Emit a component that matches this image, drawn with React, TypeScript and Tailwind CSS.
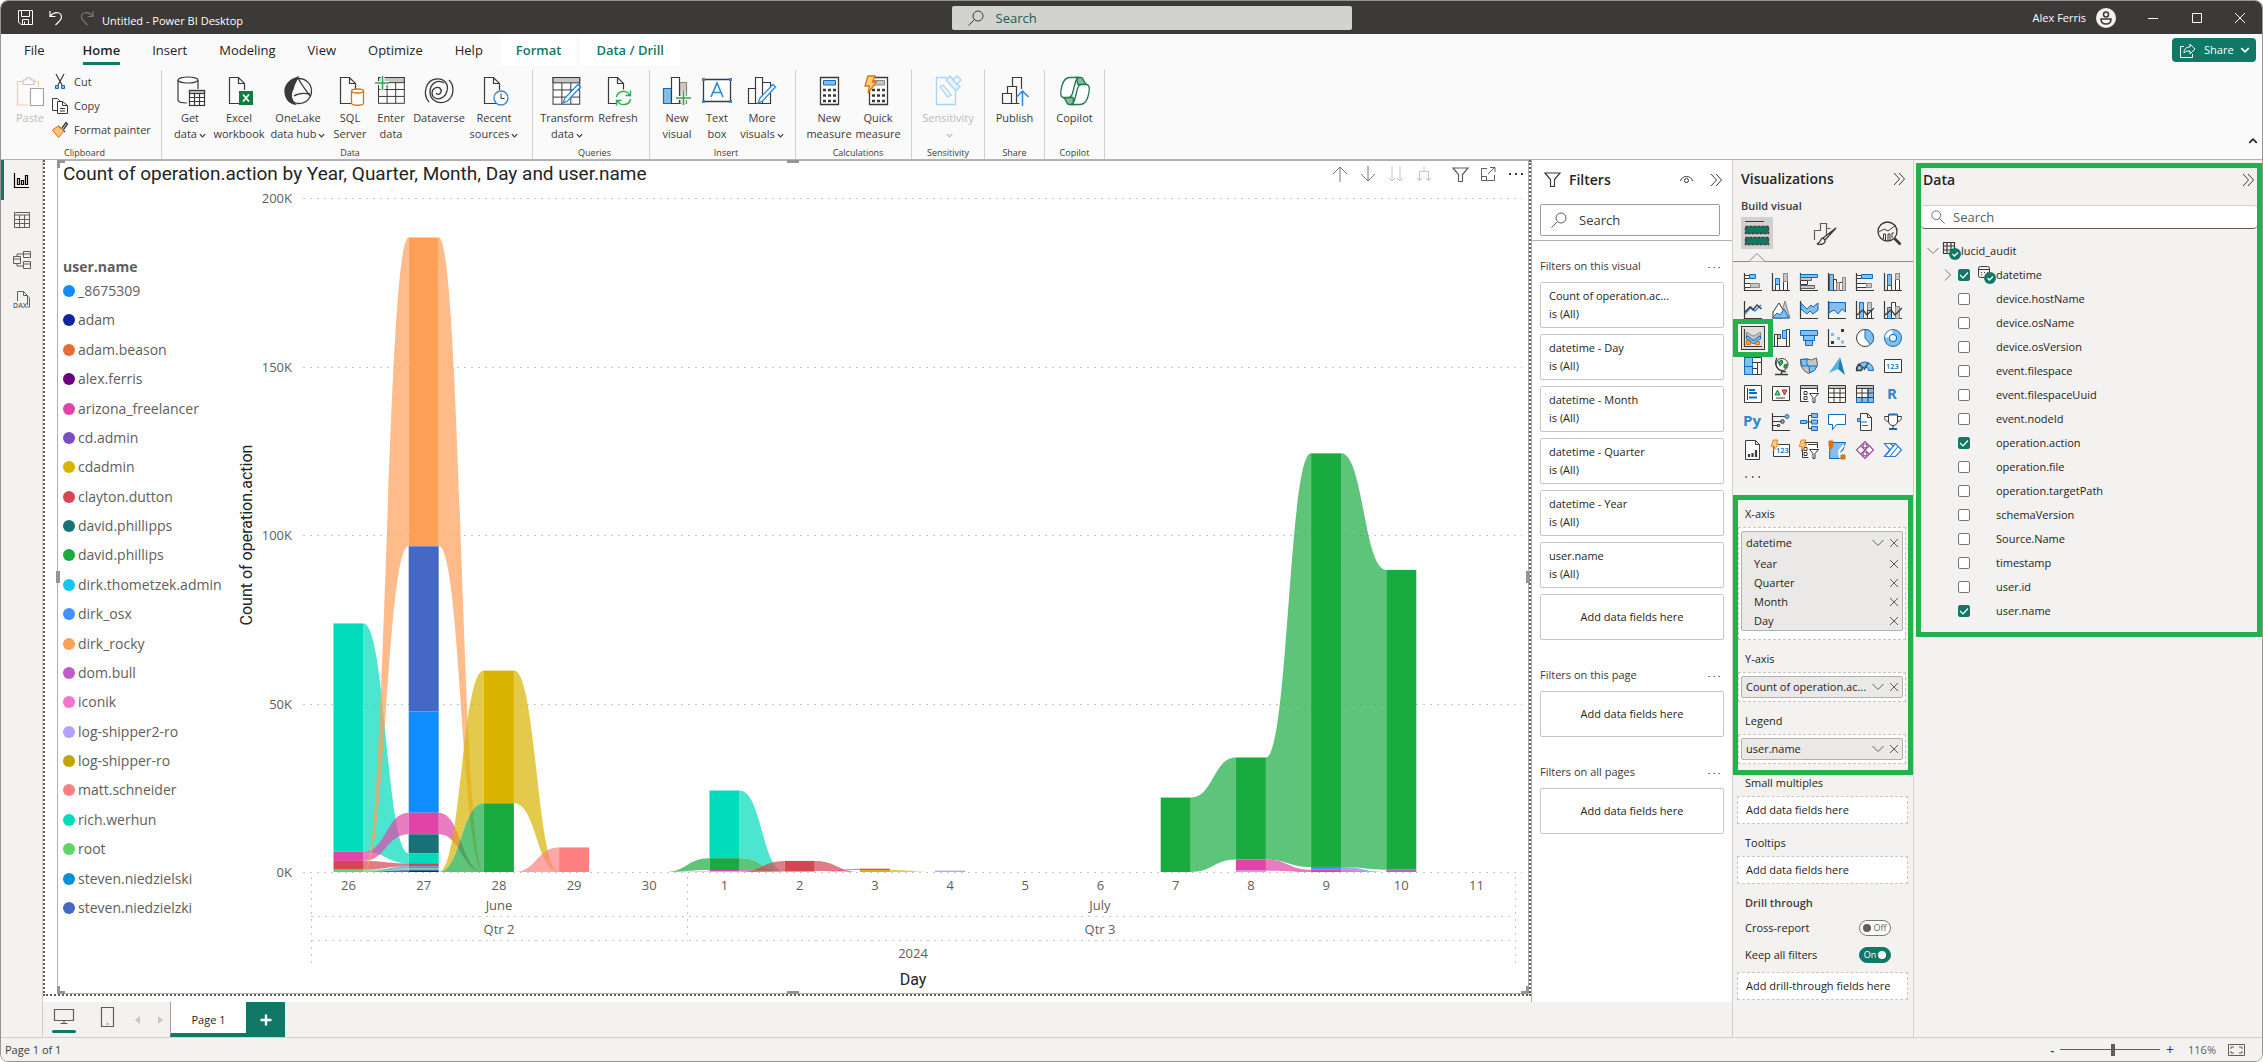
import { ReactNode } from "react";

const INK = "#3b3a39";
const BLUE = "#0f6cbd";
const SKY = "#83beec";
const SILVER = "#c8c6c4";
const GREEN = "#117865";
const ORANGE = "#d9730d";

/* ---------- chart data ---------- */

const users: Record<string, string> = {
  _8675309: "#118dff",
  adam: "#12239e",
  "adam.beason": "#e66c37",
  "alex.ferris": "#6b007b",
  arizona_freelancer: "#e044a7",
  "cd.admin": "#744ec2",
  cdadmin: "#d9b300",
  "clayton.dutton": "#d64550",
  "david.phillipps": "#197278",
  "david.phillips": "#1aab40",
  "dirk.thometzek.admin": "#15c6f4",
  dirk_osx: "#4092ff",
  dirk_rocky: "#ffa058",
  "dom.bull": "#be5dc9",
  iconik: "#f472d0",
  "log-shipper2-ro": "#b5a1ff",
  "log-shipper-ro": "#c4a200",
  "matt.schneider": "#ff8080",
  "rich.werhun": "#00dbbc",
  root: "#5bd667",
  "steven.niedzielski": "#0091d5",
  "steven.niedzielzki": "#4668c5",
};

type Slice = [user: string, thousands: number];

// Slices run from the top of the stack down. A zero keeps the ribbon
// to or from the neighbouring day alive.
const days: { label: string; slices: Slice[] }[] = [
  {
    label: "26",
    slices: [
      ["rich.werhun", 67.8],
      ["arizona_freelancer", 2.7],
      ["clayton.dutton", 2.6],
      ["root", 0.7],
      ["dirk_rocky", 0],
      ["dirk_osx", 0],
      ["adam", 0],
    ],
  },
  {
    label: "27",
    slices: [
      ["dirk_rocky", 91.7],
      ["steven.niedzielzki", 49],
      ["_8675309", 30.1],
      ["arizona_freelancer", 6.4],
      ["david.phillipps", 5.6],
      ["rich.werhun", 3],
      ["clayton.dutton", 0.9],
      ["dirk_osx", 0.6],
      ["root", 0.6],
      ["adam", 0.5],
      ["cdadmin", 0],
      ["david.phillips", 0],
    ],
  },
  {
    label: "28",
    slices: [
      ["cdadmin", 39.4],
      ["david.phillips", 20.4],
      ["dirk_rocky", 0],
      ["arizona_freelancer", 0],
      ["matt.schneider", 0],
    ],
  },
  { label: "29", slices: [["matt.schneider", 7.3], ["cdadmin", 0]] },
  { label: "30", slices: [["david.phillips", 0], ["log-shipper2-ro", 0]] },
  {
    label: "1",
    slices: [
      ["rich.werhun", 20.1],
      ["david.phillips", 3.5],
      ["arizona_freelancer", 0.4],
      ["log-shipper2-ro", 0.2],
      ["clayton.dutton", 0],
    ],
  },
  {
    label: "2",
    slices: [
      ["clayton.dutton", 3],
      ["log-shipper2-ro", 0.3],
      ["rich.werhun", 0],
      ["david.phillips", 0],
      ["arizona_freelancer", 0],
    ],
  },
  { label: "3", slices: [["arizona_freelancer", 0.4], ["cdadmin", 0.6], ["clayton.dutton", 0]] },
  { label: "4", slices: [["log-shipper2-ro", 0.4], ["cdadmin", 0]] },
  { label: "5", slices: [] },
  { label: "6", slices: [] },
  { label: "7", slices: [["david.phillips", 22.1]] },
  {
    label: "8",
    slices: [["david.phillips", 30.3], ["arizona_freelancer", 3.3], ["log-shipper2-ro", 0.4]],
  },
  {
    label: "9",
    slices: [["david.phillips", 122.8], ["dirk_osx", 0.8], ["arizona_freelancer", 0.7]],
  },
  {
    label: "10",
    slices: [["david.phillips", 89], ["dom.bull", 0.7], ["dirk_osx", 0], ["arizona_freelancer", 0]],
  },
  { label: "11", slices: [] },
];

const BASE = 685;
const PX_PER_K = 3.368;
const FIRST = 113.5;
const STEP = 75.2;
const HALF = 15;

const stacks = days.map(({ slices }) => {
  let left = slices.reduce((sum, [, v]) => sum + v, 0);
  return slices.map(([user, v]) => {
    const top = BASE - left * PX_PER_K;
    left -= v;
    return { user, top, bottom: BASE - Math.max(left, 0) * PX_PER_K };
  });
});

function RibbonChart() {
  const ribbons: ReactNode[] = [];
  stacks.forEach((stack, i) => {
    stack.forEach((a) => {
      const b = (stacks[i + 1] ?? []).find((s) => s.user === a.user);
      if (!b) return;
      const x0 = FIRST + i * STEP + HALF;
      const x1 = x0 + STEP - HALF * 2;
      const mid = (x0 + x1) / 2;
      ribbons.push(
        <path
          key={`${i}-${a.user}`}
          d={`M${x0} ${a.top}C${mid} ${a.top} ${mid} ${b.top} ${x1} ${b.top}V${b.bottom}C${mid} ${b.bottom} ${mid} ${a.bottom} ${x0} ${a.bottom}Z`}
          fill={users[a.user]}
          fillOpacity={0.7}
        />
      );
    });
  });

  return (
    <svg viewBox="0 0 1293 804" className="w-full" role="img" aria-label="Ribbon chart">
      <g stroke="#c8c6c4" strokeDasharray="2 5">
        {[0, 50, 100, 150, 200].map((k) => (
          <path key={k} d={`M68 ${Math.round(BASE - k * PX_PER_K) + 0.5}H1287`} />
        ))}
        <path d="M76.5 690V780M452.5 690V754M1280.5 690V780M76 729.5H1280M76 753.5H1280" />
      </g>
      {ribbons}
      {stacks.map((stack, i) =>
        stack
          .filter((s) => s.bottom > s.top)
          .map((s) => (
            <rect
              key={`${i}-${s.user}`}
              x={FIRST + i * STEP - HALF}
              y={s.top}
              width={HALF * 2}
              height={s.bottom - s.top}
              fill={users[s.user]}
            />
          ))
      )}
      <g fill="#605e5c" fontSize="13">
        {[0, 50, 100, 150, 200].map((k) => (
          <text key={k} x="57" y={BASE - k * PX_PER_K + 5} textAnchor="end">
            {k}K
          </text>
        ))}
        <g textAnchor="middle">
          {days.map((d, i) => (
            <text key={d.label} x={FIRST + i * STEP} y="703">
              {d.label}
            </text>
          ))}
          <text x="264" y="723">June</text>
          <text x="865" y="723">July</text>
          <text x="264" y="747">Qtr 2</text>
          <text x="865" y="747">Qtr 3</text>
          <text x="678" y="771">2024</text>
        </g>
      </g>
      <g className="font-['Roboto',sans-serif]" fill="#252423" fontSize="16" textAnchor="middle">
        <text x="678" y="798">Day</text>
        <text transform="translate(17 348) rotate(-90)">Count of operation.action</text>
      </g>
    </svg>
  );
}

/* ---------- icons ---------- */

function Icon({
  size,
  box,
  color = INK,
  children,
}: {
  size: string;
  box: string;
  color?: string;
  children: ReactNode;
}) {
  return (
    <svg viewBox={box} className={`${size} shrink-0 overflow-visible`} fill="none" stroke={color} aria-hidden="true">
      {children}
    </svg>
  );
}

function Chevron({ className = "size-2" }: { className?: string }) {
  return (
    <svg viewBox="0 0 8 8" className={`${className} inline-block shrink-0`} fill="none" stroke="currentColor" aria-hidden="true">
      <path d="M1 2.5l3 3 3-3" strokeWidth="1.4" />
    </svg>
  );
}

function Search({ className = "size-4" }: { className?: string }) {
  return (
    <svg viewBox="0 0 16 16" className={`${className} shrink-0`} fill="none" stroke="currentColor" aria-hidden="true">
      <circle cx="10" cy="6" r="5" />
      <path d="M6.5 9.5L.5 15.5" />
    </svg>
  );
}

function DoubleChevron() {
  return (
    <button aria-label="Collapse pane">
      <Icon size="size-3" box="0 0 12 12">
        <path d="M1 0l5.500 6L1 12M6 0l5.500 6L6 12" />
      </Icon>
    </button>
  );
}

function Cross() {
  return (
    <button aria-label="Remove field">
      <Icon size="size-2" box="0 0 8 8" color="#605e5c">
        <path d="M0 0l8 8M8 0L0 8" />
      </Icon>
    </button>
  );
}

function Funnel({ size, color = INK }: { size: string; color?: string }) {
  return (
    <Icon size={size} box="0 0 17 17" color={color}>
      <path d="M1 2h15L10.500 8.500V15.500H6.500V8.500Z" strokeWidth="1.2" />
    </Icon>
  );
}

const page = <path d="M18.500 27.500H5.500V1.500H14.500L20.500 7.500V14M14.500 1.500V7.500H20.500" strokeWidth="1.2" />;

function Grid({ x, y, s }: { x: number; y: number; s: number }) {
  return (
    <g>
      <rect x={x} y={y} width={s * 3} height={s * 3} fill="#fff" />
      <rect x={x} y={y} width={s * 3} height={s * 0.6} fill={SILVER} />
      <path d={`M${x} ${y + s * 1.4}h${s * 3}M${x} ${y + s * 2.2}h${s * 3}M${x + s} ${y + s * 0.6}v${s * 2.4}M${x + s * 2} ${y + s * 0.6}v${s * 2.4}`} />
    </g>
  );
}

function Pencil() {
  return <path d="M13 22L26 8.500l2.500 2.500L15.500 25l-4.500 2z" fill="#fff" stroke="#2b88d8" strokeWidth="1.3" />;
}

function Bolt() {
  return <path d="M5 0h7l-2.500 6h4L5 17l1.500-7H2z" fill="#fccf7e" stroke={ORANGE} strokeWidth="1.3" />;
}

const keys = (
  <path d="M9 14h3M14 14h3M19 14h3M9 19.500h3M14 19.500h3M19 19.500h3M9 25h3M14 25h3M19 25h3" strokeWidth="2.600" />
);

const ribbonIcons: Record<string, ReactNode> = {
  paste: (
    <g strokeWidth="1.2">
      <path d="M13 29H2.500V5.500H23.500V11" stroke="#f6cf9f" />
      <path d="M8 8.500V4h3a2.500 2.500 0 0 1 5 0h3v4.500z" stroke={SILVER} fill="#fafafa" />
      <path d="M15.500 12.500H28.500V29.500H15.500Z" stroke="#a6a6a6" fill="#fff" />
    </g>
  ),
  database: (
    <g strokeWidth="1.2">
      <ellipse cx="13" cy="4" rx="10" ry="3" />
      <path d="M3 4V24c0 2 4 3 9 3M23 4v9" />
      <Grid x={14.5} y={14.5} s={5} />
    </g>
  ),
  excel: (
    <g>
      {page}
      <rect x="15" y="15" width="14" height="14" fill="#107c41" stroke="none" />
      <path d="M19 18.500l6 7M25 18.500l-6 7" stroke="#fff" strokeWidth="1.800" />
    </g>
  ),
  onelake: (
    <g strokeWidth="1.300">
      <circle cx="16" cy="15" r="12.500" />
      <path d="M15 1C8 3 2 8 2 15s4 12 10 13c-4-4-5-10-2-15 1-5 3-8 5-12z" fill={INK} />
      <path d="M15 2c3 6 7 11 12 18M27 18c-5-1-12-1-16 2" />
    </g>
  ),
  sql: (
    <g>
      {page}
      <path d="M16.500 15v12c0 3 12 3 12 0V15" fill="#fff" stroke={ORANGE} strokeWidth="1.300" />
      <ellipse cx="22.500" cy="15" rx="6" ry="2" fill="#fff" stroke={ORANGE} strokeWidth="1.300" />
    </g>
  ),
  enter: (
    <g>
      <Grid x={2.5} y={1.5} s={8.600} />
      <path d="M-1 7h14M6.500 0v14" stroke="#fafafa" strokeWidth="4" />
      <path d="M-1 7h14M6.500 0v14" stroke="#2fa84f" strokeWidth="1.600" />
    </g>
  ),
  dataverse: (
    <g strokeWidth="1.300">
      <path d="M5 26C-2 18 2 4 12 3c8-1 13 5 11 12s-8 9-12 7-4-8 0-10 7 1 6 4-4 3-5 1" />
      <path d="M25 4c6 6 5 17-2 21s-17 0-17-9 8-13 14-9" />
    </g>
  ),
  recent: (
    <g>
      {page}
      <circle cx="22" cy="22" r="7" fill="#fff" stroke="#2b88d8" strokeWidth="1.300" />
      <path d="M22 17.500V22.500H25.500" />
    </g>
  ),
  transform: (
    <g>
      <Grid x={1} y={1.5} s={8.900} />
      <Pencil />
    </g>
  ),
  refresh: (
    <g>
      {page}
      <circle cx="20.500" cy="22" r="8.500" fill="#fafafa" stroke="none" />
      <path d="M13.500 21a7 7 0 0 1 13-2M27.500 23a7 7 0 0 1-13 2M27.500 14.500V19.500H22.500M13.500 29.500V24.500H18.500" stroke="#2fa84f" strokeWidth="1.400" />
    </g>
  ),
  visual: (
    <g strokeWidth="1.200">
      <path d="M1.500 12.500H9.500V27.500H1.500Z" fill={SKY} stroke={BLUE} />
      <path d="M17.500 6.500H24.500V27.500H17.500Z" fill={SILVER} stroke="#8a8886" />
      <path d="M9.500 1.500H17.500V27.500H9.500Z" fill="#fff" />
      <path d="M14 22h15M21.500 15v14" stroke="#fafafa" strokeWidth="4" />
      <path d="M14 22h15M21.500 15v14" stroke="#2fa84f" strokeWidth="1.600" />
    </g>
  ),
  text: (
    <g>
      <path d="M1.500 3.500H28.500V25.500H1.500Z" fill="#fff" strokeWidth="1.300" />
      <path d="M9 21L15 7l6 14M11 16.500h8" stroke="#2b88d8" strokeWidth="1.600" />
      <path d="M0 3.500h3M27 3.500h3M0 25.500h3M27 25.500h3" stroke="#2b88d8" strokeWidth="3" />
    </g>
  ),
  more: (
    <g strokeWidth="1.200">
      <path d="M1.500 12.500H8.500V27.500H1.500ZM8.500 1.500H15.500V27.500H8.500ZM15.500 6.500H23.500V27.500H15.500Z" fill="#fff" />
      <Pencil />
    </g>
  ),
  calculator: (
    <g>
      <path d="M6.500 1.500H24.500V28.500H6.500Z" fill="#fff" strokeWidth="1.300" />
      <path d="M9.500 4.500H21.500V9H9.500Z" fill={SKY} stroke={BLUE} />
      {keys}
    </g>
  ),
  quick: (
    <g>
      <path d="M6.500 1.500H24.500V28.500H6.500Z" fill="#fff" strokeWidth="1.300" />
      <path d="M9.500 4.500H21.500V9H9.500Z" fill={SILVER} stroke="#8a8886" />
      {keys}
      <Bolt />
    </g>
  ),
  sensitivity: (
    <g stroke="#a9d3f2" strokeWidth="1.300">
      <path d="M14 1.500H3.500V28.500H22.500V16" />
      <path d="M7 11l3-2 8 10-3 2z" />
      <path d="M13 4l4-4 10 11-4 4z" fill="#e5f1fb" />
      <path d="M20 4l4-4 4 4-4 4z" fill="#fafafa" />
    </g>
  ),
  publish: (
    <g strokeWidth="1.200">
      <path d="M2.500 17.500H11.500V27.500H2.500ZM7.500 17V10.500H16.500V27.500H11.500M12.500 10V1.500H21.500V13M16.500 27.500h3" />
      <path d="M22.500 30V15.500M16.500 21l6-6 6 6" stroke="#2b88d8" strokeWidth="1.500" />
    </g>
  ),
  copilot: (
    <g stroke="#217a4b" strokeWidth="1.300">
      <path d="M16 1.500h5c3 0 3 7 6 7h-9z" fill="#85bd9c" />
      <path d="M14 28.500H9c-3 0-3-7-6-7h10z" fill="#85bd9c" />
      <path d="M10 1.500h9c-3 0-4 6-6 14-1 5-3 6-5 6H4c-4 0-4-5-2-12S7 1.500 10 1.500z" fill="#fff" />
      <path d="M20 28.500h-9c3 0 4-6 6-14 1-5 3-6 5-6h4c4 0 4 5 2 12s-5 8-8 8z" fill="#fff" />
    </g>
  ),
};

function B({ d, f = "#fff", s = INK }: { d: string; f?: string; s?: string }) {
  return <path d={d} fill={f} stroke={s} />;
}

const axes = <path d="M.5 0V17.500H18" strokeWidth="1.200" />;
const tag = { fontSize: 7.5, fontWeight: 600, fill: BLUE, stroke: "none" };

const visualIcons: { name: string; art: ReactNode }[] = [
  {
    name: "Stacked bar chart",
    art: <>{axes}<B d="M.5 2.500h5v3h-5zM.5 10.500h6v4h-6z" /><B d="M5.500 1.500h6v4h-6z" f={SKY} s={BLUE} /><B d="M6.500 10.500h9v4h-9z" f={SILVER} s="#8a8886" /></>,
  },
  {
    name: "Stacked column chart",
    art: <>{axes}<B d="M3.500 11.500h4v6h-4zM11.500 8.500h4v9h-4z" /><B d="M3.500 5.500h4v6h-4z" f={SKY} s={BLUE} /><B d="M11.500 .5h4v8h-4z" f={SILVER} s="#8a8886" /></>,
  },
  {
    name: "Clustered bar chart",
    art: <>{axes}<B d="M.5 1.500h17v3H.5z" f={SKY} s={BLUE} /><B d="M.5 4.500h11v3H.5zM.5 12.500h14v3H.5z" f={SILVER} s="#605e5c" /><B d="M.5 7.500h7v4H.5z" /></>,
  },
  {
    name: "Clustered column chart",
    art: <>{axes}<B d="M1.500 1.500h4v16h-4z" f={SKY} s={BLUE} /><B d="M5.500 6.500h3v11h-3zM11.500 9.500h3v8h-3z" /><B d="M8.500 9.500h3v8h-3zM14.500 4.500h3v13h-3z" f={SILVER} s="#8a8886" /></>,
  },
  {
    name: "100% stacked bar chart",
    art: <>{axes}<B d="M.5 2.500h5v3h-5zM.5 10.500h10v4H.5z" /><B d="M5.500 1.500h11v4h-11z" f={SKY} s={BLUE} /><B d="M10.500 10.500h5v4h-5z" f={SILVER} s="#8a8886" /></>,
  },
  {
    name: "100% stacked column chart",
    art: <>{axes}<B d="M3.500 12.500h4v5h-4zM11.500 6.500h4v11h-4z" /><B d="M3.500 1.500h4v11h-4z" f={SKY} s={BLUE} /><B d="M11.500 .5h4v6h-4z" f={SILVER} s="#8a8886" /></>,
  },
  {
    name: "Line chart",
    art: <>{axes}<path d="M1 13l6-7 4 4 6-6" stroke="#2b88d8" strokeWidth="1.400" /><path d="M1 11l5-5 3 3 4-5 4.500 4" strokeWidth="1.300" /></>,
  },
  {
    name: "Area chart",
    art: <><B d="M13 0l5 17H8z" f={SILVER} s="#8a8886" /><B d="M1 11L7 2l6 10-3 5H1z" /><B d="M0 17l5-5 3 2 4-6 5 9z" f={SKY} s={BLUE} /></>,
  },
  {
    name: "Stacked area chart",
    art: <>{axes}<B d="M1 2l6 6 4-4 2 2 5-4v7l-5 4-3-3-3 3-6-5z" f={SKY} s={BLUE} /></>,
  },
  {
    name: "100% stacked area chart",
    art: <>{axes}<B d="M1 1.500h16.500V11L14 8l-4 5-4-4-5 3z" f={SKY} s={BLUE} /></>,
  },
  {
    name: "Line and stacked column chart",
    art: <>{axes}<B d="M3.500 1.500h4v16h-4z" f={SKY} s={BLUE} /><B d="M11.500 1.500h4v8h-4z" f={SILVER} s="#8a8886" /><B d="M11.500 9.500h4v8h-4z" /><path d="M1 14l6-5 4 5 7-7" strokeWidth="1.300" /></>,
  },
  {
    name: "Line and clustered column chart",
    art: <>{axes}<B d="M3.500 6.500h4v11h-4z" f={SKY} s={BLUE} /><B d="M7.500 1.500h4v16h-4z" /><B d="M11.500 5.500h4v12h-4z" f={SILVER} s="#8a8886" /><path d="M1 14l6-5 4 5 7-7" strokeWidth="1.300" /></>,
  },
  {
    name: "Ribbon chart",
    art: (
      <>
        <path d="M2.500 11.500h4v4h-4zM11.500 12.500h4v3h-4z" fill="#f2a04a" stroke={ORANGE} />
        <path d="M2.500 3.500c3 0 4 3.500 7 3.500s4-3.500 7-3.500v3c-3 0-4 4-7 4s-4-4-7-4z" fill={SILVER} stroke="#8a8886" />
        <path d="M2.500 7c3 0 4 4.500 7 4.500s4-4.500 7-4.500v3c-3 0-4 4.500-7 4.500s-4-4.500-7-4.500z" fill={SKY} stroke={BLUE} />
        <path d="M.5 0V17.500H18" strokeWidth="1.200" />
      </>
    ),
  },
  {
    name: "Waterfall chart",
    art: <>{axes}<B d="M2.500 5.500h3v12h-3zM14.500 .5h3v17h-3z" /><B d="M5.500 5.500h3v4h-3z" f={SILVER} /><B d="M10.500 1.500h4v8h-4z" f={SKY} s={BLUE} /></>,
  },
  {
    name: "Funnel",
    art: <B d="M.5 1.500h17v5h-17zM3.500 6.500h11v5h-11zM5.500 11.500h7v5h-7z" f={SKY} s={BLUE} />,
  },
  {
    name: "Scatter chart",
    art: <>{axes}<path d="M13 1.500h3M3 13.500h3" strokeWidth="3" /><path d="M3 5.500h3M9 9.500h3M13 13h3" stroke={SKY} strokeWidth="3" /></>,
  },
  {
    name: "Pie chart",
    art: <><circle cx="9" cy="9" r="8.500" fill="#fff" /><B d="M9 .5a8.500 8.500 0 0 1 5.500 15L9 9z" f={SKY} s={BLUE} /></>,
  },
  {
    name: "Donut chart",
    art: <><circle cx="9" cy="9" r="6" stroke={BLUE} strokeWidth="6" /><circle cx="9" cy="9" r="6" stroke={SKY} strokeWidth="4" /><path d="M3 8.500A6 6 0 0 1 8.500 3" stroke="#fff" strokeWidth="4" /></>,
  },
  {
    name: "Treemap",
    art: <><B d="M.5 .5h17v17H.5z" /><B d="M.5 .5h8v17h-8z" f={SKY} s={BLUE} /><path d="M.5 9.500h8" stroke={BLUE} /><path d="M8.500 5.500h9M8.500 11.500h5M13.500 5.500v12" /></>,
  },
  {
    name: "Map",
    art: <><circle cx="10" cy="7.500" r="6" fill="#fff" /><path d="M6 5l4-2 1 3-3 3zM12 8l3-1-1 4h-2z" fill="#2fa84f" stroke="#1b7a38" /><path d="M5 1a9 9 0 0 0 9 13.500M3 17.500h13M9.500 15v2" strokeWidth="1.300" /></>,
  },
  {
    name: "Filled map",
    art: <><B d="M.5 2.500l7-.5 4 1 5-2 1 7-3 5-6 3.500-4-2.500-3.500-5z" f={SILVER} s="#605e5c" /><B d="M.5 2.500l7-.5-1 4 2 3H2z" f={SKY} s={BLUE} /><B d="M9 9h8l-2.500 4.500-5 2.500z" f={SKY} s={BLUE} /></>,
  },
  {
    name: "Azure map",
    art: <><path d="M12 0L1 16l9-4z" fill="#50b3e6" stroke="none" /><path d="M12 0l5 18-7-6z" fill="#1f7fb5" stroke="none" /></>,
  },
  {
    name: "Gauge",
    art: <><B d="M.5 13.500a8.500 8.500 0 0 1 17 0h-5a3.500 3.500 0 0 0-7 0z" f={SKY} s={BLUE} /><path d="M.5 13.500A8.500 8.500 0 0 1 3 7l4 4-2 2.500zM8 13l4-7" strokeWidth="1.300" /></>,
  },
  {
    name: "Card",
    art: <><B d="M.5 2.500h17v13H.5z" /><text x="2" y="12" {...tag}>123</text></>,
  },
  {
    name: "Multi-row card",
    art: <><B d="M.5 .5h17v17H.5z" /><path d="M3.500 3v12" /><path d="M5 5h6M5 8h8M5 12.500h8" stroke={BLUE} strokeWidth="1.800" /></>,
  },
  {
    name: "KPI",
    art: <><B d="M.5 1.500h17v14H.5z" /><path d="M3 10l2.500-5L8 10z" fill="#6fcf8a" stroke="#1b7a38" /><path d="M10 5h5l-2.500 5z" fill="#f1707b" stroke="#c4262e" /><path d="M4 13h9" /></>,
  },
  {
    name: "Slicer",
    art: <><B d="M17.500 7V.5H.5v16h8" /><path d="M1 2h16" stroke={SILVER} strokeWidth="2" /><path d="M.5 3.500h17M4 6.500h3v3H4zM4 11.500h3v3H4z" /><B d="M9.500 8.500h9l-3.500 4v5h-2v-5z" /></>,
  },
  {
    name: "Table",
    art: <><B d="M.5 .5h17v17H.5z" /><path d="M1 2h16" stroke={SILVER} strokeWidth="2" /><path d="M.5 3.500h17M.5 8h17M.5 12.500h17M6 4v13M12 4v13" /></>,
  },
  {
    name: "Matrix",
    art: <><B d="M.5 .5h17v17H.5z" /><path d="M1 2h16" stroke={SILVER} strokeWidth="2" /><B d="M12 3.500h5.500v14H.5v-5H12z" f={SKY} s={BLUE} /><path d="M.5 3.500h17M.5 8h17M.5 12.500h17M6 4v13M12 4v13" /></>,
  },
  { name: "R script visual", art: <text x="3" y="14" fontSize="15" fontWeight="700" fill="#2b88c8" stroke="none">R</text> },
  { name: "Python visual", art: <text x="-1" y="13" fontSize="15" fontWeight="700" fill="#2b88c8" stroke="none">Py</text> },
  {
    name: "Key influencers",
    art: <>{axes}<path d="M1 3.500h12M1 8.500h8M1 12.500h5" /><circle cx="15" cy="3.500" r="2" fill={SKY} stroke={BLUE} /><path d="M9 7h3v3H9zM5.500 11.500h2v2h-2z" fill={SILVER} /></>,
  },
  {
    name: "Decomposition tree",
    art: <><path d="M6 9h5M8.500 2.500v13h3M8.500 2.500h3" /><B d="M.5 7.500h6v3h-6zM11.500 .5h6v4h-6zM11.500 7h6v4h-6zM11.500 13.500h6v4h-6z" f={SKY} s={BLUE} /></>,
  },
  { name: "Q&A", art: <B d="M.5 1.500h17v10h-9l-4 5v-5h-4z" s={BLUE} /> },
  {
    name: "Narrative",
    art: <><B d="M4.500 17.500V.5h7l4 4v13z" /><path d="M11.500 .5v4h4" /><path d="M4 9h7M6 12.500h6" stroke={BLUE} /><B d="M1.500 5.500h3v3h-3z" f={SKY} s={BLUE} /></>,
  },
  {
    name: "Metrics",
    art: <><B d="M4.500 1.500h9V8c0 3-2 4.500-4.500 4.500S4.500 11 4.500 8z" /><path d="M4.500 3.500h-4c0 3 1 5 4.500 5M13.500 3.500h4c0 3-1 5-4.500 5M9 12v3" /><path d="M5 1.500h8M5 16h8" stroke={BLUE} strokeWidth="2" /></>,
  },
  {
    name: "Paginated report",
    art: <><B d="M1.500 -.5h10l4 4v15h-14z" /><path d="M11.500 -.5v4h4" /><path d="M5 16v-3M8.500 16v-4M12 16V9" strokeWidth="2.200" /></>,
  },
  {
    name: "New card",
    art: <><B d="M1.500 3.500h16v12h-16z" /><text x="4" y="12" {...tag}>123</text><g transform="translate(-2 -1) scale(.65)"><Bolt /></g></>,
  },
  {
    name: "New slicer",
    art: <><B d="M17.500 7V1.500h-15v15h6" /><path d="M8 3.500h9M4 6.500h3v3H4zM4 11.500h3v3H4z" /><B d="M9.500 8.500h9l-3.500 4v5h-2v-5z" /><g transform="translate(-2 -1) scale(.65)"><Bolt /></g></>,
  },
  {
    name: "ArcGIS maps",
    art: <><B d="M2 1.500h15.500L15 9l-4 3 2 5.500H1.500z" f={SKY} s={BLUE} /><path d="M16 4l-5 6 1 7" stroke="#fff" strokeWidth="2" /><path d="M1 0h4v5L3 8 1 5zM13 14h4v4h-4z" fill={ORANGE} stroke={ORANGE} /></>,
  },
  {
    name: "Power Apps",
    art: <g stroke="#9b4f9e" strokeWidth="1.200"><path d="M9 .5L17.500 9 9 17.500.5 9z" fill="#fff" /><path d="M5 5l8 8M13 5l-8 8" /><circle cx="9" cy="5" r="2" /><circle cx="9" cy="13" r="2" /></g>,
  },
  {
    name: "Power Automate",
    art: <g stroke="#2b7de1" strokeWidth="1.200"><path d="M.5 2.500h11l6 6.500-6 6.500H.5L6 9z" fill="#fff" /><path d="M11.500 2.500L.5 15.500M14 5.500L6 15.500M6 2.500l4 3" /></g>,
  },
];

/* ---------- title bar and ribbon ---------- */

function TitleBar() {
  return (
    <header className="flex h-[33px] items-center bg-[#3b3a39] pr-[17px] pl-[17px] text-white">
      <div className="flex flex-1 items-center">
        <button aria-label="Save" className="mr-4">
          <Icon size="size-[15px]" box="0 0 15 15" color="#fff">
            <path d="M.5 .5h14v14H3L.5 12zM3.500 .5v6h8v-6M4.500 14.500v-5h6v5M6.500 11.500v3" />
          </Icon>
        </button>
        <button aria-label="Undo" className="mr-[17px]">
          <Icon size="size-[14px]" box="0 0 14 14" color="#fff">
            <path d="M1 0v5.500h5.500M1.500 5c4-5 11-4 11 1 0 3-3 5-6 8" strokeWidth="1.200" />
          </Icon>
        </button>
        <button aria-label="Redo" className="mr-2" disabled>
          <Icon size="size-[14px]" box="0 0 14 14" color="#797775">
            <path d="M13 0v5.500H7.500M12.500 5c-4-5-11-4-11 1 0 3 3 5 6 8" strokeWidth="1.200" />
          </Icon>
        </button>
        <h1 className="mt-1.5 text-[11px] leading-4">Untitled - Power BI Desktop</h1>
      </div>
      <label className="ml-10 flex h-6 w-[400px] items-center gap-3 rounded-xs bg-[#d2d2cf] px-4 text-[#3b3a39]">
        <Search />
        <input
          type="search"
          aria-label="Search"
          placeholder="Search"
          className="min-w-0 flex-1 bg-transparent text-[13px] leading-5 outline-none placeholder:text-[#185c4d]"
        />
      </label>
      <div className="flex flex-1 items-center justify-end">
        <span className="text-[11px] leading-4">Alex Ferris</span>
        <span className="mr-8 ml-2.5 flex size-5 items-center justify-center rounded-full bg-[#f3f2f1]">
          <Icon size="size-4" box="0 0 16 16">
            <circle cx="8" cy="4.500" r="2.500" strokeWidth="1.500" />
            <path d="M3 9h10c0 3-2 5-5 5s-5-2-5-5z" strokeWidth="1.500" />
          </Icon>
        </span>
        <button aria-label="Minimize" className="mr-[34px]">
          <Icon size="size-2.5" box="0 0 10 10" color="#fff"><path d="M0 5.500h10" /></Icon>
        </button>
        <button aria-label="Maximize" className="mr-[33px]">
          <Icon size="size-2.5" box="0 0 10 10" color="#fff"><path d="M.5 .5h9v9h-9z" /></Icon>
        </button>
        <button aria-label="Close">
          <Icon size="size-2.5" box="0 0 10 10" color="#fff"><path d="M0 0l10 10M10 0L0 10" /></Icon>
        </button>
      </div>
    </header>
  );
}

const tabs = ["Insert", "Modeling", "View", "Optimize", "Help"];

function TabRow() {
  return (
    <nav className="flex h-[34px] items-start pl-[7px] text-[13px] leading-[32px] text-[#252423]">
      <a href="#file" className="mr-1.5 px-4">File</a>
      <a href="#home" className="px-4 font-semibold">
        <span className="block h-[31px] border-b-3 border-[#117865]">Home</span>
      </a>
      {tabs.map((t) => (
        <a key={t} href={`#${t.toLowerCase()}`} className="px-4">
          {t}
        </a>
      ))}
      <a href="#format" className="mx-0.5 bg-white px-[15px] font-semibold text-[#117865]">Format</a>
      <a href="#drill" className="ml-0.5 bg-white px-4 font-semibold text-[#117865]">Data / Drill</a>
      <button className="mt-1 mr-1.5 ml-auto flex h-6 w-[84px] items-center rounded bg-[#117865] pl-2 text-[11px] leading-4 text-white">
        <Icon size="size-4" box="0 0 16 16" color="#fff">
          <path d="M4 4.500H.5v11h12V12M4 11c0-4 2-6 6-6V2l5 5-5 5V9c-3 0-4 0-6 2z" />
        </Icon>
        <span className="mr-1.5 ml-2">Share</span>
        <Chevron className="size-2.5" />
      </button>
    </nav>
  );
}

function Tool({ icon, width, lines, drop, muted }: { icon: string; width: string; lines: string[]; drop?: boolean; muted?: boolean }) {
  return (
    <button disabled={muted} className={`${width} flex flex-col items-center text-[11px] leading-4 whitespace-nowrap ${muted ? "text-[#bebbb8]" : "text-[#3b3a39]"}`}>
      <span className="mb-1">
        <Icon size="size-[30px]" box="0 0 30 30">{ribbonIcons[icon]}</Icon>
      </span>
      {lines.map((line, i) => (
        <span key={i}>
          {line}
          {drop && i === lines.length - 1 && <Chevron className="ml-0.5 size-[7px]" />}
        </span>
      ))}
    </button>
  );
}

function Group({ name, className = "", children }: { name: string; className?: string; children: ReactNode }) {
  return (
    <section className={`flex h-[89px] flex-col justify-between border-r border-[#d2d0ce] pt-1.5 ${className}`}>
      <div className="flex items-start">{children}</div>
      <h2 className="text-center text-[9px] leading-3 text-[#3b3a39]">{name}</h2>
    </section>
  );
}

function Ribbon() {
  return (
    <div className="flex h-[92px] items-start border-b border-[#b5b3b1] pt-0.5">
      <Group name="Clipboard" className="w-[161px] pl-[7px]">
        <Tool icon="paste" width="w-[44px]" lines={["Paste"]} muted />
        <div className="-mt-1.5 flex flex-col text-[11px] leading-4 text-[#3b3a39]">
          <button className="flex h-6 items-center gap-1.5">
            <Icon size="size-4" box="0 0 16 16">
              <path d="M4 0l6 11M12 0L6 11" strokeWidth="1.200" />
              <path d="M3.500 11.500h3v3h-3zM9.500 11.500h3v3h-3z" fill={SKY} stroke={BLUE} />
            </Icon>
            Cut
          </button>
          <button className="flex h-6 items-center gap-1.5">
            <Icon size="size-4" box="0 0 16 16">
              <path d="M5 12.500H.5V.5h5l3 3M5.500 3.500h5l5 4v8h-10zM10.500 3.500v4h5M8 10.500h5M8 13h5" />
            </Icon>
            Copy
          </button>
          <button className="flex h-6 items-center gap-1.5">
            <Icon size="size-4" box="0 0 16 16">
              <path d="M10 6l4-5.500 1.500 1.500L11.500 7.500M6 4l7 6" strokeWidth="1.300" />
              <path d="M6 4L.5 8l6 7.500L12 9z" fill="#f8c27a" stroke={ORANGE} />
            </Icon>
            Format painter
          </button>
        </div>
      </Group>
      <Group name="Data" className="w-[371px] pl-1.5">
        <Tool icon="database" width="w-[44px]" lines={["Get", "data"]} drop />
        <Tool icon="excel" width="w-[54px]" lines={["Excel", "workbook"]} />
        <Tool icon="onelake" width="w-[64px]" lines={["OneLake", "data hub"]} drop />
        <Tool icon="sql" width="w-[40px]" lines={["SQL", "Server"]} />
        <Tool icon="enter" width="w-[42px]" lines={["Enter", "data"]} />
        <Tool icon="dataverse" width="w-[54px]" lines={["Dataverse"]} />
        <Tool icon="recent" width="w-[56px]" lines={["Recent", "sources"]} drop />
      </Group>
      <Group name="Queries" className="w-[117px] pl-[7px]">
        <Tool icon="transform" width="w-[54px]" lines={["Transform", "data"]} drop />
        <Tool icon="refresh" width="w-[48px]" lines={["Refresh"]} />
      </Group>
      <Group name="Insert" className="w-[146px] pl-[7px]">
        <Tool icon="visual" width="w-[40px]" lines={["New", "visual"]} />
        <Tool icon="text" width="w-[40px]" lines={["Text", "box"]} />
        <Tool icon="more" width="w-[50px]" lines={["More", "visuals"]} drop />
      </Group>
      <Group name="Calculations" className="w-[116px] pl-[9px]">
        <Tool icon="calculator" width="w-[48px]" lines={["New", "measure"]} />
        <Tool icon="quick" width="w-[50px]" lines={["Quick", "measure"]} />
      </Group>
      <Group name="Sensitivity" className="w-[73px]">
        <Tool icon="sensitivity" width="w-[72px]" lines={["Sensitivity", ""]} drop muted />
      </Group>
      <Group name="Share" className="w-[60px]">
        <Tool icon="publish" width="w-[60px]" lines={["Publish"]} />
      </Group>
      <Group name="Copilot" className="w-[60px]">
        <Tool icon="copilot" width="w-[60px]" lines={["Copilot"]} />
      </Group>
      <button aria-label="Collapse ribbon" className="mt-auto mr-1 mb-1 ml-auto rotate-180">
        <Chevron className="size-2.5" />
      </button>
    </div>
  );
}

/* ---------- left rail ---------- */

function Rail() {
  return (
    <aside className="flex w-[42px] shrink-0 flex-col border-r border-[#d2d0ce] bg-[#f3f2f1]">
      <button aria-label="Report view" className="flex h-10 items-center justify-center border-l-3 border-[#117865] pr-[3px]">
        <Icon size="size-[15px]" box="0 0 15 15" color="#000">
          <path d="M.5 0v14.500H15M3.500 5.500h2v6h-2zM7.500 7.500h2v4h-2zM11.500 2.500h2v9h-2z" strokeWidth="1.200" />
        </Icon>
      </button>
      <button aria-label="Table view" className="flex h-10 items-center justify-center">
        <Icon size="size-4" box="0 0 16 16" color="#605e5c">
          <path d="M.5 .5h15v15H.5zM.5 3h15M.5 7.500h15M.5 11.500h15M5.500 3v12.500M10.500 3v12.500" />
        </Icon>
      </button>
      <button aria-label="Model view" className="flex h-10 items-center justify-center">
        <Icon size="size-[18px]" box="0 0 18 18" color="#605e5c">
          <path d="M.5 5.500h7v7h-7zM.5 8h7M10.500 .5h7v6h-7zM10.500 3h7M10.500 10.500h7v7h-7zM10.500 13h7M4 5.500V3h6.500M4 12.500V15h6.500" />
        </Icon>
      </button>
      <button aria-label="DAX query view" className="flex h-10 items-center justify-center">
        <Icon size="size-[18px]" box="0 0 18 18" color="#605e5c">
          <path d="M4.500 10V.5h6l4 4V14M10.500 .5v4h4M14.500 5l2 2v9h-2" />
          <text x="0" y="17" fontSize="7" fontWeight="600" fill="#605e5c" stroke="none">DAX</text>
        </Icon>
      </button>
    </aside>
  );
}

/* ---------- canvas ---------- */

function VisualTools() {
  return (
    <div className="flex items-center gap-3">
      <button aria-label="Drill up"><Icon size="size-4" box="0 0 16 16" color="#797775"><path d="M8 16V1M1 8l7-7 7 7" /></Icon></button>
      <button aria-label="Drill down"><Icon size="size-4" box="0 0 16 16" color="#797775"><path d="M8 0v15M1 8l7 7 7-7" /></Icon></button>
      <button aria-label="Next level"><Icon size="size-4" box="0 0 16 16" color="#c8c6c4"><path d="M4 0v15M1 12l3 3 3-3M12 0v15M9 12l3 3 3-3" /></Icon></button>
      <button aria-label="Expand all" className="mr-2"><Icon size="size-4" box="0 0 16 16" color="#c8c6c4"><path d="M8 0v5M3.500 15V5.500h9V15M1 12l2.500 3L6 12M10 12l2.500 3 2.500-3" /></Icon></button>
      <button aria-label="Filters"><Funnel size="size-[17px]" color="#605e5c" /></button>
      <button aria-label="Focus mode"><Icon size="size-[15px]" box="0 0 15 15" color="#605e5c"><path d="M6 1.500H.5v12h13V8M.5 9.500h5v4M7 7l6-6M9 .5h5V5" /></Icon></button>
      <button aria-label="More options"><Icon size="size-4" box="0 0 16 16" color="#3b3a39"><path d="M1 8h2M7 8h2M13 8h2" strokeWidth="2" /></Icon></button>
    </div>
  );
}

function Legend() {
  return (
    <div className="w-[177px] shrink-0 pt-[70px] pl-[5px] text-[14px] leading-5 text-[#605e5c]">
      <h3 className="font-bold">user.name</h3>
      <ul className="flex h-[645px] flex-col justify-between py-1">
        {Object.entries(users).map(([name, color]) => (
          <li key={name} className="flex items-center gap-[3px] whitespace-nowrap">
            <span className="size-3 rounded-full" style={{ backgroundColor: color }} />
            {name}
          </li>
        ))}
      </ul>
    </div>
  );
}

function Canvas() {
  return (
    <main className="min-w-0 flex-1 bg-white pb-1.5">
      <div className="h-full border-x-2 border-b-2 border-dotted border-[#605e5c] pl-3">
        <div className="relative h-full border border-[#b3b0ad]">
          <div className="flex h-[26px] items-center justify-between pr-1 pl-[5px]">
            <h2 className="font-['Roboto',sans-serif] text-[19px] leading-6 text-[#252423]">
              Count of operation.action by Year, Quarter, Month, Day and user.name
            </h2>
            <VisualTools />
          </div>
          <div className="flex items-start">
            <Legend />
            <div className="min-w-0 flex-1">
              <RibbonChart />
            </div>
          </div>
          <i className="absolute -top-px -left-px size-2 border-t-3 border-l-3 border-[#979593]" />
          <i className="absolute -top-px left-1/2 h-[3px] w-3 -translate-x-1/2 bg-[#979593]" />
          <i className="absolute top-1/2 -left-0.5 h-3 w-1 -translate-y-1/2 bg-[#979593]" />
          <i className="absolute top-1/2 -right-0.5 h-3 w-1 -translate-y-1/2 bg-[#979593]" />
          <i className="absolute -bottom-px -left-px size-2 border-b-3 border-l-3 border-[#979593]" />
          <i className="absolute -bottom-px left-1/2 h-[3px] w-3 -translate-x-1/2 bg-[#979593]" />
          <i className="absolute -right-px -bottom-px size-2 border-r-3 border-b-3 border-[#979593]" />
        </div>
      </div>
    </main>
  );
}

function PageTabs() {
  return (
    <div className="flex h-[35px] items-stretch bg-[#f3f2f1]">
      <button aria-label="Desktop layout" className="ml-[9px] flex w-6 flex-col items-center justify-between pt-[7px] pb-1">
        <Icon size="h-[15px] w-5" box="0 0 20 15" color="#605e5c">
          <path d="M.5 .5h19v11H.5zM10 11.500v3M6.500 14.500h7" strokeWidth="1.200" />
        </Icon>
        <span className="h-[3px] w-full rounded bg-[#117865]" />
      </button>
      <button aria-label="Mobile layout" className="ml-[25px] flex items-start pt-[5px]">
        <Icon size="h-5 w-[13px]" box="0 0 13 20" color="#605e5c">
          <path d="M.5 .5h12v19H.5zM5.500 17h2" strokeWidth="1.200" />
        </Icon>
      </button>
      <button aria-label="Previous page" className="ml-5">
        <Icon size="size-2" box="0 0 8 8" color="none"><path d="M6 0v8L1 4z" fill="#c8c6c4" /></Icon>
      </button>
      <button aria-label="Next page" className="ml-3.5">
        <Icon size="size-2" box="0 0 8 8" color="none"><path d="M2 0v8l5-4z" fill="#c8c6c4" /></Icon>
      </button>
      <button className="ml-1.5 w-[76px] border-b-4 border-l border-b-[#117865] border-l-[#a19f9d] bg-white pt-1 text-[11px] leading-4 font-medium text-[#252423]">
        Page 1
      </button>
      <button aria-label="New page" className="flex w-[39px] items-center justify-center bg-[#117865]">
        <Icon size="size-3" box="0 0 12 12" color="#fff"><path d="M6 .5v11M.5 6h11" strokeWidth="2.400" /></Icon>
      </button>
    </div>
  );
}

/* ---------- side panes ---------- */

function FilterSection({ title, first, cards = [] }: { title: string; first?: boolean; cards?: string[] }) {
  return (
    <section className={first ? "pt-[15px]" : "pt-[25px]"}>
      <div className="flex h-5 items-center justify-between pr-3 text-[#3b3a39]">
        <h3>{title}</h3>
        <button aria-label={`${title} options`}>
          <Icon size="size-3" box="0 0 12 12" color="#605e5c"><path d="M.5 7.500H2M5.500 7.500H7M10.500 7.500H12" strokeWidth="1.200" /></Icon>
        </button>
      </div>
      <div className="mt-1.5 mr-2 flex flex-col gap-1.5">
        {cards.map((c) => (
          <div key={c} className="rounded-xs border border-[#c8c6c4] px-2 py-1 leading-[18px]">
            <p>{c}</p>
            <p>is (All)</p>
          </div>
        ))}
        <div className="flex h-[46px] items-center justify-center rounded-xs border border-[#c8c6c4]">Add data fields here</div>
      </div>
    </section>
  );
}

function FiltersPane() {
  return (
    <aside className="w-[201px] shrink-0 border-l border-[#b3b0ad] bg-white text-[11px] leading-4 text-[#252423]">
      <div className="flex h-[39px] items-center pr-2.5 pl-3">
        <Funnel size="size-[17px]" />
        <h2 className="ml-2 flex-1 text-[14px] leading-5 font-semibold">Filters</h2>
        <button aria-label="Hide filters" className="mr-[17px]">
          <Icon size="size-[13px]" box="0 0 13 13"><path d="M.5 8c1-6 11-6 12 0" /><circle cx="6.500" cy="7.500" r="2" /></Icon>
        </button>
        <DoubleChevron />
      </div>
      <div className="border-b border-[#b3b0ad] pt-[5px] pr-3 pb-1 pl-2">
        <label className="flex h-8 items-center gap-3 rounded-xs border border-[#a19f9d] pl-2.5 text-[#605e5c]">
          <Search />
          <input type="search" aria-label="Search filters" placeholder="Search" className="min-w-0 flex-1 text-[13px] leading-5 outline-none placeholder:text-[#3b3a39]" />
        </label>
      </div>
      <div className="pl-2">
        <FilterSection
          first
          title="Filters on this visual"
          cards={["Count of operation.ac...", "datetime - Day", "datetime - Month", "datetime - Quarter", "datetime - Year", "user.name"]}
        />
        <FilterSection title="Filters on this page" />
        <FilterSection title="Filters on all pages" />
      </div>
    </aside>
  );
}

function Well({ title, field, levels = [], first }: { title: string; field: string; levels?: string[]; first?: boolean }) {
  return (
    <section>
      <h3 className={`${first ? "h-[27px]" : "h-8"} flex items-end pb-[5px] pl-[7px]`}>{title}</h3>
      <div className={`border border-dashed border-[#c8c6c4] bg-white px-0.5 pt-[3px] ${levels.length ? "pb-2" : "pb-[3px]"}`}>
        <div className="rounded-xs border border-[#b3b0ad] bg-[#ebe9e8] pr-1 pl-1">
          <div className={`flex items-center gap-1.5 ${levels.length ? "h-[22px]" : "h-5"}`}>
            <span className="flex-1 whitespace-nowrap">{field}</span>
            <button aria-label={`${field} options`} className="text-[#605e5c]">
              <svg viewBox="0 0 12 8" className="h-2 w-3" fill="none" stroke="currentColor"><path d="M.5 1L6 6.500 11.500 1" /></svg>
            </button>
            <Cross />
          </div>
          {levels.map((l) => (
            <div key={l} className="flex h-[19px] items-center justify-between pl-2">
              {l}
              <Cross />
            </div>
          ))}
        </div>
      </div>
    </section>
  );
}

function EmptyWell({ children }: { children: ReactNode }) {
  return <div className="mr-[5px] ml-1 flex h-7 items-center border border-dashed border-[#c8c6c4] bg-white pl-2 whitespace-nowrap">{children}</div>;
}

function Toggle({ label, on }: { label: string; on?: boolean }) {
  return (
    <label className="flex h-[27px] items-center justify-between pr-[22px] pl-3">
      {label}
      <input type="checkbox" role="switch" defaultChecked={on} className="peer sr-only" />
      <span
        className={`flex h-4 w-8 items-center justify-center gap-0.5 rounded-full border text-[9px] leading-3 ${
          on ? "flex-row-reverse border-[#117865] bg-[#117865] text-white" : "border-[#797775] bg-white text-[#605e5c]"
        }`}
      >
        <i className={`size-2 rounded-full ${on ? "bg-white" : "bg-[#605e5c]"}`} />
        {on ? "On" : "Off"}
      </span>
    </label>
  );
}

function VisualizationsPane() {
  return (
    <aside className="w-[182px] shrink-0 border-x border-[#d2d0ce] bg-[#f3f2f1] text-[11px] leading-4 text-[#252423]">
      <div className="flex h-[38px] items-center justify-between pr-2 pl-2">
        <h2 className="text-[14px] leading-5 font-semibold">Visualizations</h2>
        <DoubleChevron />
      </div>
      <h3 className="pl-2 font-semibold text-[#3b3a39]">Build visual</h3>
      <div className="relative flex items-center justify-between border-b border-[#8a8886] pt-[3px] pr-3 pb-3 pl-2">
        <button aria-label="Build visual" className="flex size-8 items-center justify-center bg-[#d2d0ce]">
          <Icon size="size-6" box="0 0 24 24">
            <path d="M0 .5h19" strokeWidth="1.200" />
            <path d="M.5 5.500h23v7H.5zM.5 16.500h23v7H.5z" fill={GREEN} strokeDasharray="3 1" strokeWidth="1.400" />
          </Icon>
        </button>
        <button aria-label="Format visual">
          <Icon size="size-6" box="0 0 24 24">
            <path d="M1.500 19V9.500h6V2.500h6v13M13.500 7.500h4" stroke="#605e5c" strokeWidth="1.200" />
            <path d="M23 7L12 19l-2-2zM10 17c-3 0-2 5-6 6 4 1 9 0 8-4z" fill="#fff" strokeWidth="1.300" />
          </Icon>
        </button>
        <button aria-label="Analytics">
          <Icon size="size-6" box="0 0 24 24">
            <circle cx="10.500" cy="10.500" r="9.500" strokeWidth="1.300" />
            <path d="M17.500 17.500l6 6" strokeWidth="2.600" />
            <path d="M2 11l5-3 4 2 8-6M6.500 18v-5h2v6M11 19v-6h2v6M15 17v-5h2" />
          </Icon>
        </button>
        <svg viewBox="0 0 16 9" className="absolute -bottom-px left-4 h-[9px] w-4" fill="#f3f2f1" stroke="#8a8886" aria-hidden="true">
          <path d="M0 8.500L8 .5l8 8" />
        </svg>
      </div>
      <div className="grid grid-cols-[repeat(6,28px)] pt-1.5 pl-1.5">
        {visualIcons.map(({ name, art }) => {
          const selected = name === "Ribbon chart";
          return (
            <button key={name} aria-label={name} className={`relative flex size-7 items-center justify-center ${selected ? "z-10" : ""}`}>
              <span className={selected ? "border border-[#3b3a39] bg-[#e1dfdd] p-0.5" : ""}>
                <Icon size="size-[18px]" box="0 0 18 18">{art}</Icon>
              </span>
              {selected && <i className="absolute -inset-x-1.5 -inset-y-[5px] border-5 border-[#22b14c]" />}
            </button>
          );
        })}
      </div>
      <button aria-label="More visuals" className="ml-3 flex h-[26px] items-center">
        <Icon size="size-4" box="0 0 16 16"><path d="M.5 8H2M7 8h1.500M13.500 8H15" strokeWidth="1.400" /></Icon>
      </button>
      <div className="mt-[5px] border-5 border-[#22b14c] pr-0.5 pb-1.5">
        <Well first title="X-axis" field="datetime" levels={["Year", "Quarter", "Month", "Day"]} />
        <Well title="Y-axis" field="Count of operation.ac..." />
        <Well title="Legend" field="user.name" />
      </div>
      <h3 className="pb-[5px] pl-3">Small multiples</h3>
      <EmptyWell>Add data fields here</EmptyWell>
      <h3 className="pt-[11px] pb-[5px] pl-3">Tooltips</h3>
      <EmptyWell>Add data fields here</EmptyWell>
      <h3 className="mt-[11px] mb-[3px] pl-3 font-semibold text-[#3b3a39]">Drill through</h3>
      <Toggle label="Cross-report" />
      <Toggle label="Keep all filters" on />
      <div className="pt-1">
        <EmptyWell>Add drill-through fields here</EmptyWell>
      </div>
    </aside>
  );
}

const fields = [
  "datetime",
  "device.hostName",
  "device.osName",
  "device.osVersion",
  "event.filespace",
  "event.filespaceUuid",
  "event.nodeId",
  "operation.action",
  "operation.file",
  "operation.targetPath",
  "schemaVersion",
  "Source.Name",
  "timestamp",
  "user.id",
  "user.name",
];
const picked = ["datetime", "operation.action", "user.name"];

function Badge() {
  return (
    <g>
      <circle cx="12" cy="12" r="6" fill={GREEN} stroke="none" />
      <path d="M9.500 12l2 2 3.500-3.500" stroke="#fff" strokeWidth="1.300" />
    </g>
  );
}

function DataPane() {
  return (
    <aside className="w-[348px] shrink-0 bg-[#f3f2f1] pt-[3px] pl-0.5 text-[11px] leading-4 text-[#252423]">
      <div className="border-5 border-[#22b14c] pb-[9px]">
        <div className="mb-3.5 flex h-[23px] items-center justify-between pr-[3px] pl-0.5">
          <h2 className="text-[14px] leading-5 font-semibold">Data</h2>
          <DoubleChevron />
        </div>
        <label className="flex h-6 items-center gap-2 rounded border-t border-b border-t-[#d2d0ce] border-b-[#605e5c] bg-white pl-2.5 text-[#605e5c]">
          <span className="-scale-x-100"><Search className="size-3.5" /></span>
          <input type="search" aria-label="Search data" placeholder="Search" className="min-w-0 flex-1 text-[13px] leading-5 outline-none placeholder:text-[#605e5c]" />
        </label>
        <div className="mt-2.5 flex h-6 items-center pl-1.5">
          <Icon size="h-2 w-3" box="0 0 12 8" color="#797775"><path d="M.5 1L6 6.500 11.500 1" /></Icon>
          <span className="ml-1 flex h-[18px] items-start">
            <Icon size="size-[18px]" box="0 0 18 18">
              <path d="M.5 .5h11v11H.5zM4 .5v11M8 .5v11M.5 4h11M.5 8h11" strokeWidth="1.200" />
              <Badge />
            </Icon>
          </span>
          <span>lucid_audit</span>
        </div>
        <ul>
          {fields.map((f, i) => (
            <li key={f} className="flex h-6 items-center pl-6">
              <span className="flex w-[13px]">
                {i === 0 && <Icon size="h-3 w-2" box="0 0 8 12" color="#797775"><path d="M0 .5L5.500 6 0 11.500" /></Icon>}
              </span>
              <label className="flex items-center">
                <span className="relative flex size-3">
                  <input type="checkbox" defaultChecked={picked.includes(f)} className="peer size-3 appearance-none rounded-xs border border-[#797775] bg-white checked:border-[#117865] checked:bg-[#117865]" />
                  <svg viewBox="0 0 12 12" className="pointer-events-none absolute inset-0 hidden size-3 peer-checked:block" fill="none" stroke="#fff" aria-hidden="true">
                    <path d="M2 6l3 3 5-5.500" strokeWidth="1.200" />
                  </svg>
                </span>
                <span className="mr-px ml-2 flex w-[17px] items-start">
                  {i === 0 && (
                    <Icon size="size-[18px]" box="0 0 18 18">
                      <rect x=".5" y=".5" width="11" height="11" rx="2" />
                      <path d="M.5 3.500h11M3 6.500h1M6 6.500h1M9 6.500h1M3 9h1" />
                      <Badge />
                    </Icon>
                  )}
                </span>
                {f}
              </label>
            </li>
          ))}
        </ul>
      </div>
    </aside>
  );
}

function StatusBar() {
  return (
    <footer className="flex h-6 items-center border-t border-[#d2d0ce] bg-[#f3f2f1] pr-[17px] pl-1 text-[11px] leading-4 text-[#3b3a39]">
      <span className="flex-1">Page 1 of 1</span>
      <button aria-label="Zoom out" className="mr-1.5 font-bold">-</button>
      <input
        type="range"
        aria-label="Zoom"
        defaultValue={53}
        className="h-3 w-[100px] appearance-none bg-[linear-gradient(#605e5c,#605e5c)] bg-[length:100%_1px] bg-center bg-no-repeat [&::-webkit-slider-thumb]:h-3 [&::-webkit-slider-thumb]:w-1 [&::-webkit-slider-thumb]:appearance-none [&::-webkit-slider-thumb]:bg-[#605e5c]"
      />
      <button aria-label="Zoom in" className="mr-3.5 ml-1.5 text-[14px]">+</button>
      <span className="mr-3 text-[#605e5c]">116%</span>
      <button aria-label="Fit to page">
        <Icon size="h-3 w-[17px]" box="0 0 17 12" color="#605e5c">
          <path d="M.5 .5h16v11H.5zM3 5V3h3M11 3h3v2M3 7v2h3M11 9h3V7" />
        </Icon>
      </button>
    </footer>
  );
}

export default function App() {
  return (
    <div className="flex min-h-screen flex-col overflow-hidden rounded-lg border border-[#979593] bg-[#fafafa] font-['Open_Sans','Noto_Sans',sans-serif] text-[#252423]">
      <TitleBar />
      <TabRow />
      <Ribbon />
      <div className="flex flex-1 items-stretch">
        <Rail />
        <div className="flex min-w-0 flex-1 flex-col">
          <div className="flex flex-1 items-stretch">
            <Canvas />
            <FiltersPane />
          </div>
          <PageTabs />
        </div>
        <VisualizationsPane />
        <DataPane />
      </div>
      <StatusBar />
    </div>
  );
}
